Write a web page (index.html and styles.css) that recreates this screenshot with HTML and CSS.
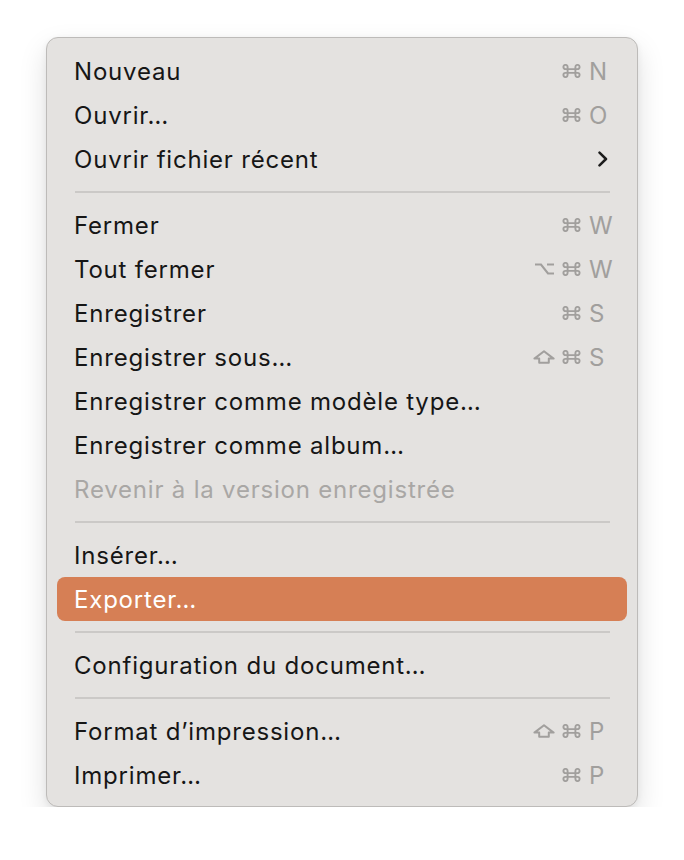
FILE: index.html
```html
<!DOCTYPE html>
<html lang="fr">
<head>
<meta charset="utf-8">
<link rel="stylesheet" href="styles.css">
</head>
<body>
<svg width="0" height="0" class="defs">
  <defs>
    <symbol id="cmd" viewBox="0 0 19 14">
      <path d="M5.6 3V11M13.4 3V11M3.5 5.1H15.5M3.5 8.9H15.5M5.6 3A2.1 2.1 0 1 0 3.5 5.1M13.4 3A2.1 2.1 0 1 1 15.5 5.1M5.6 11A2.1 2.1 0 1 1 3.5 8.9M13.4 11A2.1 2.1 0 1 0 15.5 8.9" fill="none" stroke="currentColor" stroke-width="1.9"/>
    </symbol>
    <symbol id="opt" viewBox="0 0 21 12">
      <path d="M1 1.5H7L14 10.5H20M13 1.5H20" fill="none" stroke="currentColor" stroke-width="2.1"/>
    </symbol>
    <symbol id="shift" viewBox="0 0 22 14">
      <path d="M11 1.2L20.6 8.6H15.8V12.8H6.2V8.6H1.4Z" fill="none" stroke="currentColor" stroke-width="2" stroke-linejoin="round"/>
    </symbol>
  </defs>
</svg>
<div class="menu">
  <div class="item"><span class="label">Nouveau</span><span class="keys"><svg class="mod cmd"><use href="#cmd"/></svg><span class="key">N</span></span></div>
  <div class="item"><span class="label">Ouvrir…</span><span class="keys"><svg class="mod cmd"><use href="#cmd"/></svg><span class="key">O</span></span></div>
  <div class="item"><span class="label">Ouvrir fichier récent</span><svg class="chev" width="12" height="16" viewBox="0 0 12 16"><path d="M2.5 1.6L9 8L2.5 14.4" fill="none" stroke="#1c1c1c" stroke-width="2.5" stroke-linecap="round" stroke-linejoin="round"/></svg></div>
  <div class="sep"></div>
  <div class="item"><span class="label">Fermer</span><span class="keys"><svg class="mod cmd"><use href="#cmd"/></svg><span class="key">W</span></span></div>
  <div class="item"><span class="label">Tout fermer</span><span class="keys"><svg class="mod opt"><use href="#opt"/></svg><svg class="mod cmd"><use href="#cmd"/></svg><span class="key">W</span></span></div>
  <div class="item"><span class="label">Enregistrer</span><span class="keys"><svg class="mod cmd"><use href="#cmd"/></svg><span class="key">S</span></span></div>
  <div class="item"><span class="label">Enregistrer sous…</span><span class="keys"><svg class="mod shift"><use href="#shift"/></svg><svg class="mod cmd"><use href="#cmd"/></svg><span class="key">S</span></span></div>
  <div class="item"><span class="label">Enregistrer comme modèle type…</span></div>
  <div class="item"><span class="label">Enregistrer comme album…</span></div>
  <div class="item disabled"><span class="label">Revenir à la version enregistrée</span></div>
  <div class="sep"></div>
  <div class="item"><span class="label">Insérer…</span></div>
  <div class="item active"><span class="label">Exporter…</span></div>
  <div class="sep"></div>
  <div class="item"><span class="label">Configuration du document…</span></div>
  <div class="sep"></div>
  <div class="item"><span class="label">Format d’impression…</span><span class="keys"><svg class="mod shift"><use href="#shift"/></svg><svg class="mod cmd"><use href="#cmd"/></svg><span class="key">P</span></span></div>
  <div class="item"><span class="label">Imprimer…</span><span class="keys"><svg class="mod cmd"><use href="#cmd"/></svg><span class="key">P</span></span></div>
</div>
</body>
</html>
```

FILE: styles.css
```css
html, body {
  margin: 0;
  padding: 0;
  background: #ffffff;
}
body {
  padding: 37px 0 0 46px;
  font-family: Inter, "Noto Sans", sans-serif;
}
.defs {
  position: absolute;
  width: 0;
  height: 0;
  overflow: hidden;
}
.menu {
  box-sizing: border-box;
  width: 592px;
  padding: 11px 10px 9px;
  background: #e4e2e0;
  border: 1px solid #bdbbb9;
  border-radius: 12px;
  box-shadow: 0 12px 28px rgba(0, 0, 0, 0.13), 0 2px 6px rgba(0, 0, 0, 0.06);
}
.item {
  display: flex;
  align-items: center;
  justify-content: space-between;
  height: 44px;
  padding: 0 14px 0 17px;
  border-radius: 8px;
  color: #161616;
  font-size: 24px;
  letter-spacing: 0.8px;
}
.item.disabled { color: #a9a7a5; }
.item.active {
  background: #d67f55;
  color: #ffffff;
}
.keys {
  display: flex;
  align-items: center;
  color: #a19f9d;
}
.mod {
  margin-right: 7px;
  flex: none;
}
.mod.cmd { width: 19px; height: 14px; margin-right: 8px; }
.mod.opt { width: 21px; height: 12px; }
.mod.shift { width: 22px; height: 14px; }
.key {
  width: 24px;
  letter-spacing: 0;
}
.chev { margin-right: 4px; }
.sep {
  height: 2px;
  margin: 10px 17px 10px 18px;
  background: #cbc9c7;
}
```
